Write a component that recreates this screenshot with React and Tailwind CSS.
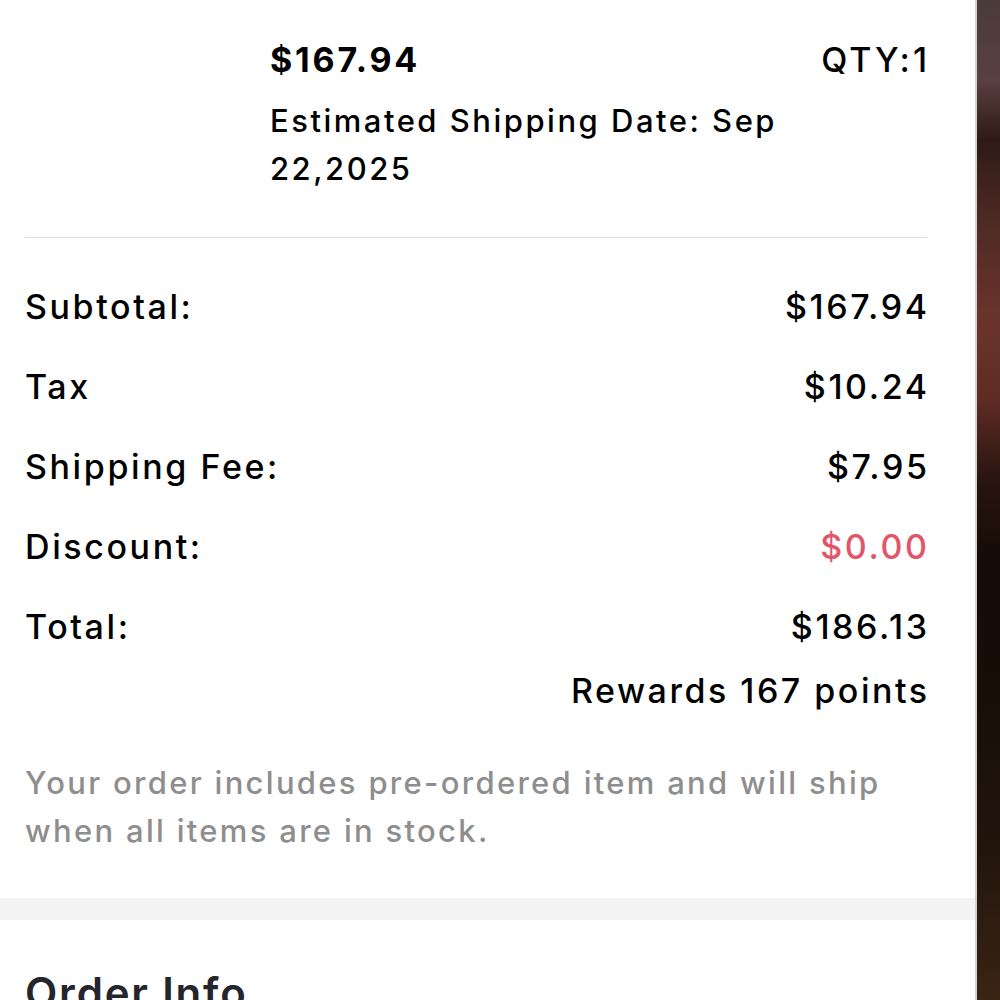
import React from 'react';

const rows = [
  { label: 'Subtotal:', value: '$167.94' },
  { label: 'Tax', value: '$10.24' },
  { label: 'Shipping Fee:', value: '$7.95' },
  { label: 'Discount:', value: '$0.00', red: true },
  { label: 'Total:', value: '$186.13' },
];

export default function App() {
  return (
    <div className="flex w-[1000px] h-[1000px] overflow-hidden bg-white font-['Inter','Liberation_Sans',sans-serif] text-black">
      <div className="w-[975px] shrink-0 flex flex-col">
        {/* item */}
        <div className="shrink-0 pl-[270px] pr-[48px] pt-[36px]">
          <div className="flex justify-between items-center leading-[48px]">
            <span className="text-[34px] font-bold tracking-[2.8px]">$167.94</span>
            <span className="text-[34px] font-medium tracking-[3px] -mr-[3px]">QTY:1</span>
          </div>
          <div className="mt-[13px] text-[31px] font-medium leading-[48px] tracking-[2.5px] w-[560px]">
            Estimated Shipping Date: Sep 22,2025
          </div>
        </div>

        <div className="shrink-0 ml-[25px] mr-[48px] mt-[44px] h-px bg-[#dcdcdc]" />

        {/* summary */}
        <div className="shrink-0 pl-[25px] pr-[48px] mt-[29px]">
          {rows.map((r) => (
            <div key={r.label} className="flex justify-between leading-[80px] text-[34px] font-medium tracking-[2.6px]">
              <span>{r.label}</span>
              <span className={r.red ? 'text-[#e0566a] -mr-[2.6px]' : '-mr-[2.6px]'}>{r.value}</span>
            </div>
          ))}
          <div className="text-right leading-[48px] text-[34px] font-medium tracking-[2.5px] -mr-[2.5px]">
            Rewards 167 points
          </div>
          <p className="mt-[44px] text-[31px] leading-[48px] text-[#8e8e8e] font-medium tracking-[2.3px]">
            Your order includes pre-ordered item and will ship when all items are in stock.
          </p>
        </div>

        <div className="shrink-0 mt-[43px] h-[22px] bg-[#f4f4f4]" />

        <div className="shrink-0 pl-[25px] pt-[48px] text-[42px] font-semibold leading-[50px] tracking-[1.8px] text-[#25252d]">
          Order Info
        </div>
      </div>
      <div className="w-[25px] shrink-0 border-l-2 border-[#d8d0cc] bg-[linear-gradient(to_bottom,#4a3a3b_0%,#5a4040_8%,#2e1a16_14%,#4e2a24_22%,#6a342c_32%,#5e2c24_40%,#281410_48%,#160b06_56%,#180e08_70%,#22150c_85%,#3a2414_100%)]" />
    </div>
  );
}
